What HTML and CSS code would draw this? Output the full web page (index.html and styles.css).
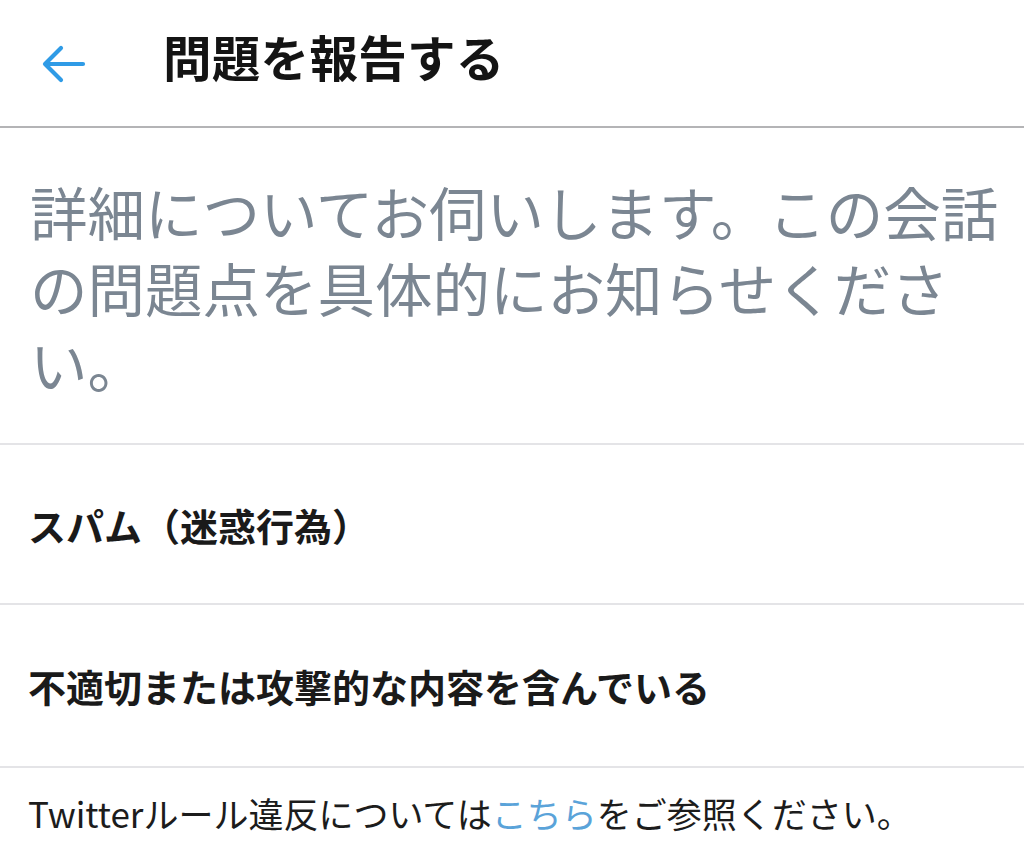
FILE: index.html
```html
<!DOCTYPE html>
<html lang="ja">
<head>
<meta charset="utf-8">
<title>問題を報告する</title>
<link rel="stylesheet" href="styles.css">
</head>
<body>
<div class="page">
  <header class="header">
    <span class="back" aria-label="戻る">
      <svg width="44" height="40" viewBox="0 0 44 40" fill="none" stroke="#2f9be6" stroke-width="4.2" stroke-linecap="round" stroke-linejoin="round">
        <path d="M41 20 H4"/>
        <path d="M19 4 L3 20 L19 36"/>
      </svg>
    </span>
    <h1 class="title">問題を報告する</h1>
  </header>
  <section class="intro">
    <p class="intro-text">詳細についてお伺いします。この会話の問題点を具体的にお知らせください。</p>
  </section>
  <ul class="options">
    <li class="option">スパム（迷惑行為）</li>
    <li class="option">不適切または攻撃的な内容を含んでいる</li>
  </ul>
  <footer class="footer">
    <p class="footer-text">Twitterルール違反については<a class="link" href="#">こちら</a>をご参照ください。</p>
  </footer>
</div>
</body>
</html>
```

FILE: styles.css
```css
html, body {
  margin: 0;
  padding: 0;
  background: #ffffff;
}

body {
  font-family: "Noto Sans CJK JP", "Noto Sans", sans-serif;
  color: #161616;
}

.page {
  width: 1024px;
  height: 854px;
  overflow: hidden;
}

.header {
  height: 126px;
  display: flex;
  align-items: center;
  border-bottom: 2px solid #b4b4b6;
  box-sizing: content-box;
}

.back {
  display: flex;
  margin-left: 42px;
  margin-top: 2px;
  width: 44px;
  height: 40px;
}

.title {
  margin: -14px 0 0 77px;
  font-size: 48.5px;
  font-weight: 700;
  line-height: 60px;
  color: #141414;
  letter-spacing: 0.3px;
}

.intro {
  padding: 45px 10px 42px 30px;
  border-bottom: 2px solid #e4e4e7;
}

.intro-text {
  margin: 0;
  font-size: 57.5px;
  line-height: 76px;
  color: #7b8692;
  font-weight: 400;
}

.options {
  list-style: none;
  margin: 0;
  padding: 0;
}

.option {
  height: 160px;
  display: flex;
  align-items: center;
  padding-left: 28px;
  font-size: 38px;
  font-weight: 700;
  color: #1a1a1a;
  border-bottom: 2px solid #e4e4e7;
  box-sizing: border-box;
}

.option:nth-child(2) {
  height: 163px;
}

.footer {
  padding: 20px 0 0 28px;
}

.footer-text {
  margin: 0;
  font-size: 35px;
  line-height: 50px;
  color: #1c1c1c;
}

.link {
  color: #5aa3d9;
  text-decoration: none;
}
```
